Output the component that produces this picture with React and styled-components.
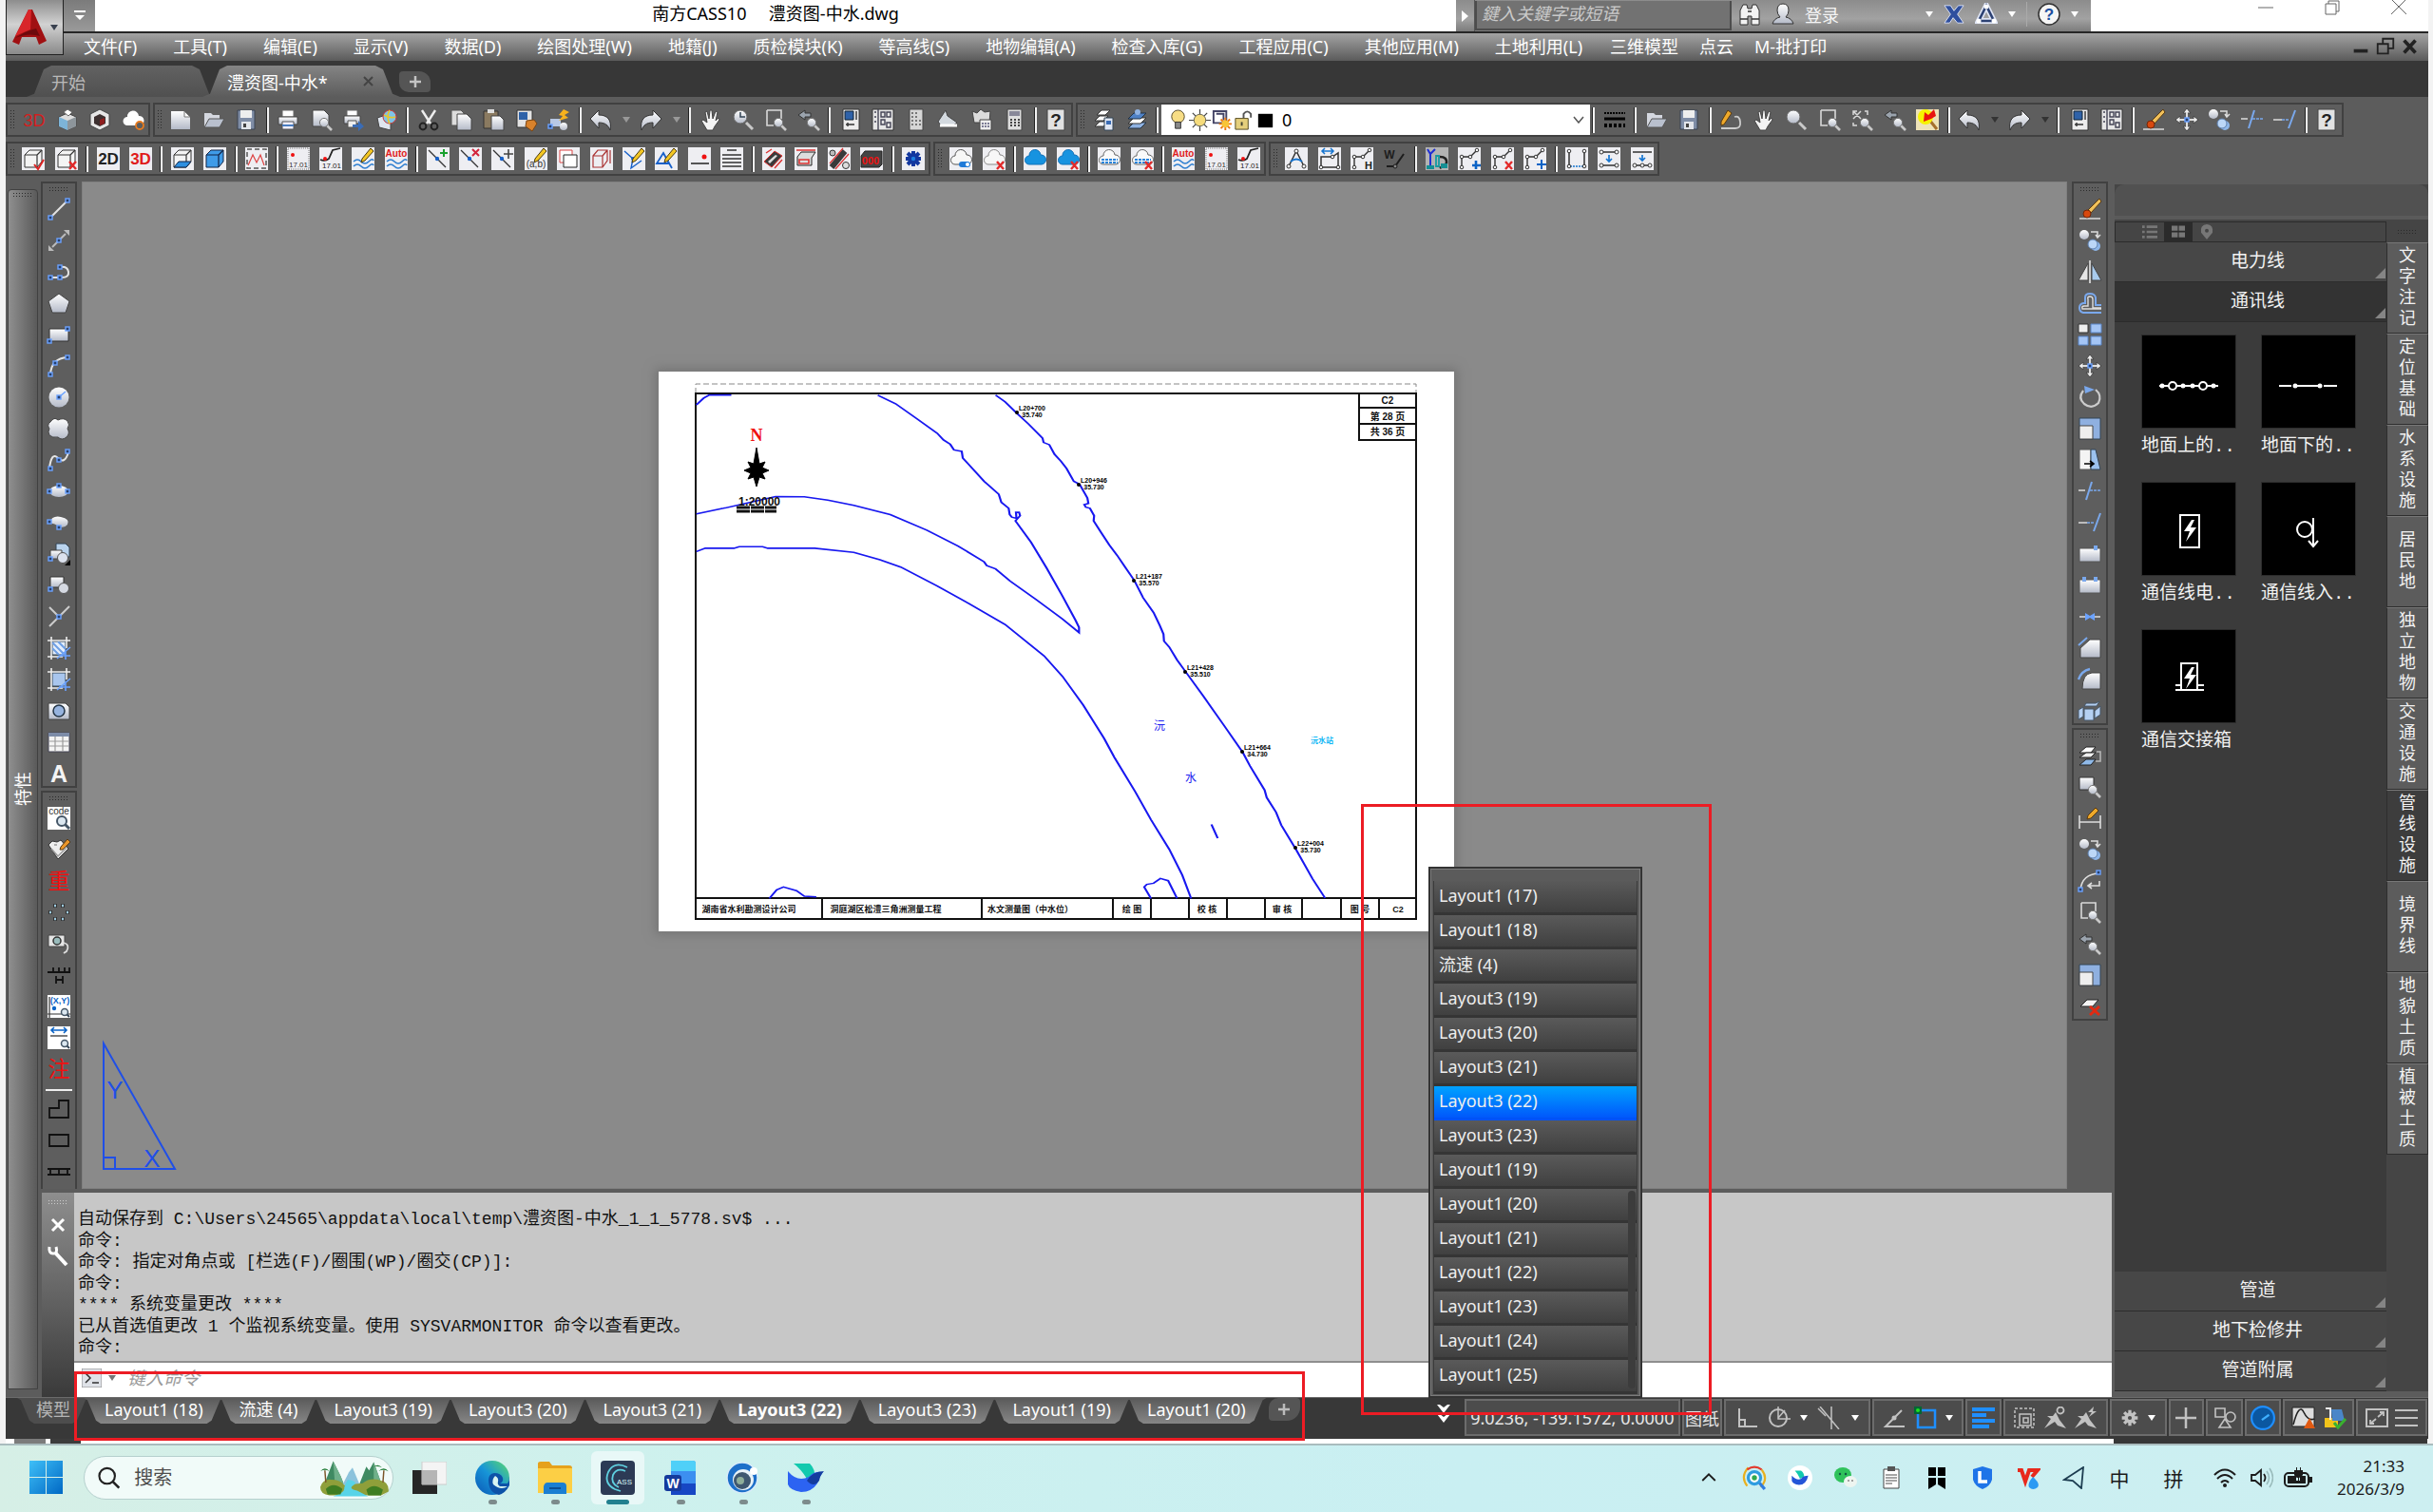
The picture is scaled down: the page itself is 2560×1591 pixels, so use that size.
import { createGlobalStyle, styled, css } from "styled-components"

const GlobalStyle = createGlobalStyle`
*{ box-sizing: border-box; }
body{
margin: 0;
background: #f3f3f3;
font-family: "Noto Sans", "Noto Sans CJK SC", sans-serif;
font-size: 18px;
}
button, input, select{
font: inherit;
color: inherit;
margin: 0;
padding: 0;
border: 0;
background: none;
}
button{ cursor: pointer; }
`

/* ---------- layout ---------- */

const Page = styled.div`
position: relative;
min-height: 100vh;
display: flex;
flex-direction: column;
`
const Window = styled.div`
flex: 1;
margin: 0 5px 0 6px;
background: #5c5c5c;
display: flex;
flex-direction: column;
`
const Header = styled.header`
display: grid;
grid-template-columns: 61px 1fr;
grid-template-rows: 33px 31px;
`
const AppButton = styled.button`
grid-area: 1 / 1 / 3 / 2;
z-index: 1;
height: 58px;
border: 1px solid #222;
border-top: 0;
background: linear-gradient(#8d8d8d, #d2d2d2 45%, #8a8a8a);
display: flex;
align-items: center;
justify-content: center;
gap: 4px;
`
const TitleBar = styled.div`
grid-area: 1 / 2;
background: #fff;
display: flex;
`
const QuickAccess = styled.button`
width: 33px;
background: linear-gradient(#7b7b7b, #9a9a9a);
display: flex;
align-items: center;
justify-content: center;
`
const Title = styled.h1`
flex: 1;
margin: 0;
font-size: 18px;
font-weight: 400;
line-height: 29px;
text-align: center;
white-space: pre;
color: #000;
`
const InfoCenter = styled.div`
width: 668px;
background: linear-gradient(#8c8c8c, #a2a2a2 60%, #7c7c7c);
color: #f4f4f4;
display: flex;
align-items: center;
`
const InfoArrow = styled.button`
width: 20px;
height: 33px;
border-right: 1px solid #555;
display: flex;
align-items: center;
justify-content: center;
`
const KeywordInput = styled.input`
width: 270px;
height: 31px;
padding: 0 5px 4px;
background: #727272;
border: 2px solid #4c4c4c;
border-top: 0;
font-style: italic;
&::placeholder{ color: #c9c9c9; opacity: 1; }
`
const InfoItems = styled.div`
flex: 1;
padding: 0 6px 3px 7px;
display: flex;
align-items: center;
gap: 11px;
`
const Login = styled.button`
width: 116px;
text-align: left;
`
const Divider = styled.span`
width: 1px;
height: 26px;
background: #aaa;
`
const WindowControls = styled.div`
width: 355px;
padding: 0 19px 14px 0;
display: flex;
align-items: center;
justify-content: flex-end;
gap: 46px;
`
const MenuBar = styled.nav`
grid-area: 2 / 1 / 3 / 3;
padding: 0 8px 2px 82px;
border-top: 2px solid #262626;
background: linear-gradient(#a3a3a3, #5b5b5b);
color: #fff;
display: flex;
align-items: center;
gap: 22px;
`
const MenuGroup = styled.div`
margin-right: 7px;
display: flex;
gap: 38px;
`
const MenuItem = styled.button`
height: 26px;
line-height: 26px;
white-space: nowrap;
`
const MdiControls = styled.div`
margin-left: auto;
display: flex;
gap: 4px;
`
const DocTabs = styled.div`
height: 38px;
padding: 5px 0 0 22px;
background: #373737;
display: flex;
`
const DocTab = styled.button`
width: ${(p) => p.$width};
padding: 0 28px 0 26px;
margin-right: -15px;
clip-path: polygon(0 100%, 8px 90%, 18px 12%, 26px 0, calc(100% - 26px) 0, calc(100% - 18px) 12%, calc(100% - 8px) 90%, 100% 100%);
background: ${(p) => (p.$active ? "linear-gradient(#848484, #5c5c5c)" : "linear-gradient(#626262, #505050)")};
color: ${(p) => (p.$active ? "#fff" : "#b9b9b9")};
display: flex;
align-items: center;
justify-content: space-between;
`
const NewTab = styled.button`
width: 33px;
height: ${(p) => (p.$bottom ? "24px" : "22px")};
margin: ${(p) => (p.$bottom ? "0 0 0 8px" : "6px 0 5px 14px")};
border-radius: ${(p) => (p.$bottom ? "10px 4px 14px 4px" : "4px 12px 4px 10px")};
background: #555;
color: #c4c4c4;
display: flex;
align-items: center;
justify-content: center;
`

/* ---------- toolbars ---------- */

const ToolbarArea = styled.div`
height: 89px;
padding-top: 6px;
display: flex;
flex-direction: column;
gap: 5px;
`
const ToolbarRow = styled.div`
display: flex;
gap: 3px;
`
const Grip = styled.span`
flex: none;
width: ${(p) => (p.$wide ? "22px" : "7px")};
height: ${(p) => (p.$wide ? "7px" : "22px")};
background: radial-gradient(circle, ${(p) => p.$color || "#2b2b2b"} 1px, transparent 1px) 0 0 / 3px 3px;
`
const Toolbar = styled.div`
width: ${(p) => p.$width};
height: 36px;
padding: 0 4px 0 2px;
border: 2px solid #414141;
background: #5e5e5e;
display: flex;
align-items: center;
justify-content: space-between;
${Grip}{ margin-right: -4px; }
`
const ToolButton = styled.button`
flex: none;
width: 24px;
height: 24px;
display: flex;
`
const Separator = styled.span`
flex: none;
width: 3px;
height: 27px;
margin: 0 -2px;
background: #f2f2f2;
border-left: 1px solid #222;
`
const LayerCombo = styled.label`
width: 451px;
height: 32px;
margin: 0 -6px;
padding: 0 6px;
background: #fff;
color: #000;
display: flex;
align-items: center;
`
const LayerSelect = styled.select`
flex: 1;
height: 30px;
padding-left: 6px;
appearance: none;
`
const Arrow = styled.span`
flex: none;
border: 4px solid transparent;
border-top: 6px solid ${(p) => p.$color || "#fff"};
border-bottom: 0;
`

/* ---------- workspace ---------- */

const Workspace = styled.div`
flex: 1;
display: flex;
`
const PropertiesPalette = styled.aside`
width: 32px;
margin: 8px 3px 8px 2px;
padding-top: 2px;
border: 1px solid #414141;
border-radius: 4px 4px 0 0;
background: linear-gradient(90deg, #8f8f8f, #5a5a5a);
color: #fff;
display: flex;
flex-direction: column;
align-items: center;
`
const PaletteTitle = styled.span`
margin-top: 603px;
writing-mode: vertical-rl;
text-orientation: sideways;
transform: rotate(180deg);
line-height: 20px;
`
const Center = styled.main`
flex: 1;
min-width: 0;
display: flex;
flex-direction: column;
`
const DrawingRow = styled.div`
flex: 1;
padding-right: 7px;
display: flex;
gap: 5px;
`
const SideBars = styled.div`
display: flex;
flex-direction: column;
gap: 3px;
`
const SideBar = styled.div`
width: 38px;
padding: 3px 0 1px;
border: 2px solid #414141;
background: #5e5e5e;
display: flex;
flex-direction: column;
align-items: center;
gap: 9px;
${(p) => p.$grow && css`flex: 1; border-bottom: 0;`}
${Grip}{ margin-bottom: -4px; }
`
const SideLine = styled.span`
width: 28px;
height: 2px;
margin-bottom: -2px;
background: #eee;
`
const Canvas = styled.div`
position: relative;
flex: 1;
background: #8a8a8a;
border: 1px solid #808080;
`
const Paper = styled.svg`
position: absolute;
left: 606px;
top: 199px;
background: #fff;
box-shadow: 0 0 10px 4px #777;
`
const Ucs = styled.svg`
position: absolute;
left: 17px;
bottom: 14px;
`
const Command = styled.section`
height: 215px;
margin: 4px 3px 0 1px;
display: flex;
`
const CommandGrip = styled.div`
width: 34px;
padding-top: 7px;
background: linear-gradient(#8e8e8e, #3a3a3a);
color: #fff;
display: flex;
flex-direction: column;
align-items: center;
gap: 12px;
`
const CommandBody = styled.div`
flex: 1;
display: flex;
flex-direction: column;
`
const History = styled.div`
height: 179px;
padding: 17px 4px 3px;
background: #c7c7c7;
border-bottom: 2px solid #8e8e8e;
color: #111;
font-family: "Liberation Mono", "Noto Sans CJK SC", monospace;
font-size: 18px;
line-height: 22px;
display: flex;
flex-direction: column;
justify-content: space-between;
`
const Line = styled.div`
height: 22px;
white-space: pre;
`
const CommandLine = styled.div`
flex: 1;
padding: 0 8px 5px;
background: #fff;
display: flex;
align-items: center;
gap: 7px;
`
const CommandInput = styled.input`
flex: 1;
padding: 0 5px 3px;
font-style: italic;
font-family: "Noto Sans CJK SC", sans-serif;
font-size: 19px;
&::placeholder{ color: #9b9b9b; opacity: 1; }
`

/* ---------- symbol panel ---------- */

const SymbolPanel = styled.aside`
width: 330px;
margin: 3px 0 6px;
background: #454545;
display: flex;
flex-direction: column;
color: #f2f2f2;
font-family: "Liberation Mono", "Noto Sans CJK SC", monospace;
font-size: 19px;
`
const PanelHeader = styled.div`
height: 37px;
padding: 7px 8px;
border-radius: 10px 10px 0 0;
background: #515151;
border-bottom: 4px solid #5a5a5a;
`
const PanelBody = styled.div`
flex: 1;
margin-top: 2px;
display: flex;
`
const PanelMain = styled.div`
width: 286px;
background: #3b3b3b;
display: flex;
flex-direction: column;
`
const ViewTabs = styled.div`
height: 22px;
padding-left: 21px;
background: #454545;
border: 1px solid #2b2b2b;
display: flex;
`
const ViewTab = styled.button`
width: 30px;
background: ${(p) => (p.$active ? "#2b2b2b" : "transparent")};
display: flex;
align-items: center;
justify-content: center;
`
const Category = styled.button`
position: relative;
height: 42px;
padding-left: 15px;
border-bottom: 1px solid #2c2c2c;
background: ${(p) => (p.$open ? "#333" : "#474747")};
line-height: 42px;
text-align: center;
&::after{
content: "";
position: absolute;
right: 1px;
bottom: 3px;
border-left: 11px solid transparent;
border-bottom: 11px solid #858585;
}
`
const Symbols = styled.div`
flex: 1;
padding: 13px 0 0 28px;
display: grid;
grid-template-columns: 100px 100px;
column-gap: 26px;
align-content: start;
`
const Symbol = styled.button`
height: 155px;
text-align: left;
white-space: nowrap;
display: flex;
flex-direction: column;
gap: 5px;
line-height: 28px;
`
const Preview = styled.span`
width: 100px;
height: 99px;
background: #000;
border: 1px solid #2c2c2c;
`
const GroupTabs = styled.div`
flex: 1;
display: flex;
flex-direction: column;
`
const GroupGrip = styled.div`
height: 22px;
display: flex;
align-items: center;
justify-content: center;
`
const GroupTab = styled.button`
height: 96px;
padding: 0 12px;
border: 1px solid #2e2e2e;
border-top-color: #777;
background: ${(p) => (p.$active ? "#3d3d3d" : "#5c5c5c")};
font-size: 18px;
line-height: 22px;
word-break: break-all;
`

/* ---------- layout tabs and status ---------- */

const BottomBar = styled.footer`
height: 44px;
border-top: 1px solid #6b6b6b;
background: #383838;
color: #fff;
display: flex;
`
const LayoutTabs = styled.div`
flex: 1;
padding: 0 0 0 12px;
display: flex;
`
const LayoutTab = styled.button`
height: 27px;
padding: 0 22px 2px;
margin-right: -6px;
background: linear-gradient(#5a5a5a, #868686);
clip-path: polygon(0 0, 4px 8%, 13px 88%, 18px 100%, calc(100% - 18px) 100%, calc(100% - 13px) 88%, calc(100% - 4px) 8%, 100% 0);
white-space: nowrap;
line-height: 25px;
${(p) => p.$active && css`font-weight: 700;`}
${(p) => p.$model && css`
padding: 0 20px 2px;
background: #4d4d4d;
color: #b5b5b5;
`}
`
const Overflow = styled.div`
position: relative;
width: 38px;
padding-left: 8px;
`
const LayoutMenu = styled.div`
position: absolute;
left: 0;
bottom: 43px;
width: 225px;
padding: 13px 3px 2px;
background: #5b5b5b;
border: 2px solid #333;
box-shadow: inset 0 0 0 1px #7b7b7b;
`
const LayoutList = styled.div`
height: 540px;
border: solid #3a3a3a;
border-width: 0 1px;
`
const LayoutOption = styled.button`
display: block;
width: 100%;
height: 36px;
padding: 0 5px 3px;
text-align: left;
border-bottom: 3px solid ${(p) => (p.$active ? "#0052f5" : "#353535")};
background: ${(p) => (p.$active ? "linear-gradient(#00a2ff, #0058fb)" : "linear-gradient(#5a5a5a, #404040)")};
color: #eee;
`
const Scroll = styled.span`
position: absolute;
right: 5px;
bottom: 8px;
width: 8px;
height: 208px;
border-radius: 4px;
background: #3c3c3c;
`
const Status = styled.div`
width: 1014px;
padding: 1px 1px 2px 0;
display: flex;
gap: 2px;
`
const Cell = styled.div`
width: ${(p) => p.$width};
height: 39px;
border: 2px solid #6c6c6c;
background: #4c4c4c;
color: #e6e6e6;
white-space: nowrap;
display: flex;
align-items: center;
justify-content: space-evenly;
`
const Strip = styled.div`
height: 5px;
margin: 0 6px;
padding-left: 9px;
background: #fff;
display: flex;
gap: 5px;
`
const StripPart = styled.span`
width: ${(p) => p.$width};
margin-left: ${(p) => (p.$end ? "auto" : 0)};
background: ${(p) => p.$color};
`

/* ---------- taskbar ---------- */

const Taskbar = styled.footer`
height: 72px;
padding: 0 30px 3px 24px;
border-top: 2px solid #a9bcbe;
background: linear-gradient(90deg, #d6efe6, #cdf1ee 30%, #c9eff2 60%, #cdeff1);
color: #1b1b1b;
display: flex;
align-items: center;
`
const Start = styled.button`
width: 49px;
height: 48px;
display: flex;
align-items: center;
justify-content: center;
`
const Search = styled.label`
width: 326px;
height: 46px;
margin: 0 5px 0 15px;
padding: 0 4px 0 14px;
border: 1px solid #b5d0ce;
border-radius: 23px;
background: #f1fbf9;
display: flex;
align-items: center;
gap: 15px;
`
const SearchInput = styled.input`
width: 181px;
font-size: 20px;
&::placeholder{ color: #4c4c4c; opacity: 1; }
`
const Task = styled.button`
position: relative;
width: 56px;
height: 56px;
margin: 0 5px;
border-radius: 6px;
background: ${(p) => (p.$active ? "#e8f8f7" : "transparent")};
display: flex;
align-items: center;
justify-content: center;
${(p) => p.$running && css`
&::after{
content: "";
position: absolute;
bottom: 0;
width: ${p.$active ? "24px" : "9px"};
height: 5px;
border-radius: 3px;
background: ${p.$active ? "#22808f" : "#7d8b8c"};
}
`}
`
const Tray = styled.div`
margin-left: auto;
display: flex;
align-items: center;
`
const TrayItem = styled.button`
width: ${(p) => p.$width || "48px"};
height: 44px;
font-size: 21px;
display: flex;
align-items: center;
justify-content: center;
`
const Clock = styled.time`
width: 92px;
font-size: 17px;
line-height: 24px;
text-align: right;
`
const Mark = styled.div`
position: absolute;
left: ${(p) => p.$left};
top: ${(p) => p.$top};
width: ${(p) => p.$width};
height: ${(p) => p.$height};
border: 3px solid #ec1c24;
pointer-events: none;
`

/* ---------- icons ---------- */

const L = (d, c = "#e4e4e4", w = 2, dash) => <path d={d} stroke={c} strokeWidth={w} strokeDasharray={dash} fill="none" />
const F = (d, c = "url(#ice)", s = "none") => <path d={d} fill={c} stroke={s} />
const C = (x, y, r, c = "url(#ice)", s = "none", w = 1) => <circle cx={x} cy={y} r={r} fill={c} stroke={s} strokeWidth={w} />
const N = (x, y) => <rect x={x - 2} y={y - 2} width="4" height="4" fill="#27406b" stroke="#6ba2ff" strokeWidth="1.4" />
const T = (s, x, y, size, c, w = 700) => <text x={x} y={y} fontSize={size} fill={c} fontWeight={w} textAnchor="middle" fontFamily="Liberation Sans, Noto Sans CJK SC, sans-serif">{s}</text>
const tile = <rect width="24" height="24" fill="#eeeef2" />
const redX = L("M15 15l7 8M22 15l-7 8", "#e32a2a", 2.4)
const waves = <>{L("M2 15q4-4 8 0t8 0 5-1M2 20q4-4 8 0t8 0 5-1", "#2f7fd0", 1.6)}</>
const pencil = <>{F("M20 1l3 3-9 10-4 2 1-4z", "#f3c623", "#4a3a12")}</>
const lens = <>{L("M18 18l5 5", "#c9c9c9", 2.6)}{C(15, 15, 4.6, "url(#ice)", "#777")}</>
const cloud = "M6 18a4.5 4.5 0 0 1 0-9 6 6 0 0 1 12-1 5 5 0 0 1 1 10z"
const poly = <>{L("M4 21V10h9l7-7", "#333", 1.4)}{C(4, 21, 1.8, "#fff", "#333")}{C(4, 10, 1.8, "#fff", "#333")}{C(13, 10, 1.8, "#fff", "#333")}{C(20, 3, 1.8, "#fff", "#333")}</>
const box = <>{F("M3 8l5-5h13v12l-5 6H3z", "#f4f4f4", "#333")}{L("M3 8h13v13M16 8l5-5", "#333", 1.2)}</>
const crossing = <>{L("M2 3l18 18", "#333", 1.3)}{C(11, 12, 2.2, "#1760c9")}</>

const icons = {
  three: <>{T("3D", 12, 19, 18, "#d21f1f", 400)}</>,
  cube: <>{F("M12 5l9 4v10l-9 4-9-4V9z", "#ddd", "#444")}{F("M3 9l9 4v10l-9-4z", "#7db4d8")}{F("M12 13l9-4v10l-9 4z", "#8d959b")}{F("M8 4l4-3 5 3-4 4z", "#fff", "#666")}</>,
  cube2: <>{F("M12 1l10 5v12l-10 5-10-5V6z", "#e6e6e6", "#444")}{F("M12 6l6 3v7l-6 3-6-3V9z", "#3d3030")}{F("M12 12l5-2v6l-5 2z", "#8e1e1e")}</>,
  cloudKey: <>{F(cloud, "#fff")}{C(19, 18, 4, "#5e5e5e", "#e87b1e", 1.8)}</>,
  fresh: <>{F("M2 3h14l6 6v13H2z")}{F("M16 3v6h6z", "#fff", "#777")}</>,
  open: <>{F("M2 5h7l2 2h7v4H8L2 20z", "#d4d7df")}{F("M7 11h16l-5 9H2z", "#b9c0ce", "#555")}</>,
  save: <>{F("M3 2h18v20H3z", "#7f8da6", "#3b4250")}{F("M6 2h12v8H6z", "#eee")}{F("M7 14h10v8H7z", "#e2e5ea")}{F("M9 16h3v4H9z", "#444")}</>,
  print: <>{F("M6 2h12v7H6z", "#fff", "#666")}{F("M2 9h20v8H2z", "url(#ice)", "#444")}{F("M6 14h12v8H6z", "#eef", "#555")}{F("M6 17h12v2H6z", "#4a7dc0")}</>,
  preview: <>{F("M3 2h12l5 5v12H3z", "url(#ice)", "#444")}{lens}</>,
  publish: <>{F("M5 2h11v6H5z", "#fff", "#666")}{F("M2 8h17v8H2z", "url(#ice)", "#444")}{F("M6 13h9v7H6z", "#eee", "#555")}{F("M11 17h6v-4l6 6-6 5v-4h-6z", "#3a6cb5")}</>,
  globe: <>{F("M2 10l9-3 5 8v8L4 20z", "#dfe6ef", "#444")}{C(15, 9, 7, "#7fc4e8", "#c33", 1)}{L("M9 7q6 4 12 2M15 2q-4 7 0 14", "#e8c62b", 1.6)}</>,
  cut: <>{L("M5 2l9 14M19 2l-9 14", "#eee", 2.4)}{C(6, 19, 3.4, "none", "#222", 2)}{C(18, 19, 3.4, "none", "#222", 2)}</>,
  copy: <>{F("M2 2h10l3 3v13H2z", "#ddd", "#555")}{F("M8 6h10l5 5v12H8z", "url(#ice)", "#444")}</>,
  paste: <>{F("M2 3h15v18H2z", "#8a7a60", "#333")}{F("M6 1h7v4H6z", "#ddd")}{F("M10 8h9l4 4v11H10z", "url(#ice)", "#444")}</>,
  match: <>{F("M2 2h16v18H2z", "#e3e3e3", "#333")}{F("M4 4h9v8H4z", "#2f62a8")}{F("M12 13l8-1 3 4-5 8-7-5z", "#d9822b", "#7b4512")}</>,
  block: <>{F("M3 11h11v8H3z", "#b8c8e4")}{C(17, 19, 4)}{F("M17 1l6 3-5 3 4 3-10 3 4-5-4-1z", "#f6b21d")}{N(3, 19)}</>,
  undo: <>{F("M10 2v5c9 0 14 5 12 16-2-5-5-8-12-8v6L1 11z", "url(#ice)", "#333")}</>,
  redo: <>{F("M14 2v5C5 7 0 12 2 23c2-5 5-8 12-8v6l9-10z", "url(#ice)", "#333")}</>,
  hand: <>{F("M8 23L2 13l2-1 4 3L6 4l2-1 2 8 1-9h2l1 9 3-8 2 1-2 9 3-3 1 2-5 7-2 4z", "#f3f3f3", "#444")}</>,
  zoomRt: <>{L("M15 15l7 7", "#c9c9c9", 3)}{C(9, 9, 7, "url(#ice)", "#666")}{L("M9 4v5h5", "#345", 1.5)}</>,
  zoomWin: <>{L("M3 2h15v9M3 2v16h7", "#d9d9d9", 1.6)}{lens}</>,
  zoomPrev: <>{F("M1 7l7-5v3h6v4H8v3z", "#9aa3ad", "#333")}{lens}</>,
  zoom: <>{L("M15 15l7 7", "#c9c9c9", 3)}{C(9, 9, 7, "url(#ice)", "#666")}</>,
  extents: <>{L("M3 3l8 8M11 3l-8 8M3 7V3h4M15 3h3v4M3 15v3h4", "#d9d9d9", 1.5)}{lens}</>,
  yellow: <>{F("M0 1h24v22H0z", "#eee3b8")}{L("M14 12l8 10", "#a5702c", 3)}{C(10, 9, 8, "#f7f200")}{F("M8 14l1-10 4 3 6-6 2 7-5 3z", "#e8140f")}</>,
  props: <>{F("M4 1h17v22H4z", "#ececec", "#333")}{F("M6 3h9v9H6z", "#2f62a8", "#123")}{L("M7 17h9M9 15v4M18 3v9", "#333", 1.4)}</>,
  center: <>{F("M1 1h22v22H1z", "#e6e6e6", "#333")}{L("M7 1v22M10 4h4v5h-4zM16 4h4v5h-4zM10 12h4v5h-4zM16 15h4v5h-4zM3 4h2M3 9h2M3 14h2", "#445", 1.4)}</>,
  palettes: <>{F("M5 1h14v22H5z", "#d6d6d6", "#444")}{L("M8 4v16M12 4v16M16 12v8", "#777", 2, "2 2")}</>,
  sheets: <>{F("M1 14l8-12 2 6 10 7-5 4H5z", "#d3d9df", "#444")}{L("M3 18h18", "#fff", 3)}</>,
  markup: <>{F("M2 3l5 2 4-4 4 3 6-1-1 12H4z", "#dcdcdc", "#444")}{F("M10 12h12v11H10z", "#eee", "#444")}{L("M12 16h8M12 19h8", "#557", 1.5, "2 1")}</>,
  calc: <>{F("M5 1h15v22H5z", "#dedede", "#444")}{F("M7 3h11v5H7z", "#889")}{L("M8 12h10M8 15h10M8 18h10", "#444", 1.8, "2 2")}</>,
  help: <>{F("M3 1h18v22H3z", "#e2e2e2", "#444")}{T("?", 12, 19, 19, "#222")}</>,
  layerProps: <>{F("M5 7l5-5h9l-5 5zM3 13l5-5h9l-5 5zM3 19l5-5h9l-5 5z", "#fff", "#333")}{F("M13 10h9v13h-9z", "#dfe6f3", "#345")}{F("M15 13h5v4h-5z", "#3a6cb5")}</>,
  layerStates: <>{F("M3 21l6-6h13l-6 6z", "#8fb2e2", "#234")}{F("M3 16l6-6h13l-6 6z", "#fff", "#333")}{F("M3 11l6-6h13l-6 6z", "#4f81c5", "#234")}{C(13, 4, 3, "#8fb2e2")}</>,
  bulb: <>{C(12, 8, 7, "#f7dd85", "#55492a")}{F("M9 14h6v7H9z", "#888", "#333")}</>,
  sun: <>{L("M12 0v24M0 12h24M4 4l16 16M20 4L4 20", "#444", 1.3)}{C(12, 12, 6.5, "#f6dc7c", "#665")}</>,
  sunVp: <>{L("M3 2h14v13H3zM6 5h8v7", "#446", 2)}{L("M16 9v14M9 16h14M11 11l10 10M21 11L11 21", "#ec7a12", 2)}{C(16, 16, 4, "#f8c537")}</>,
  lock: <>{L("M12 10V5q4-5 8 0v4", "#555", 2)}{F("M3 10h14v12H3z", "#e5cf7c", "#554a20")}{L("M10 14v4", "#443", 2)}</>,
  black: <>{F("M4 5h16v15H4z", "#000")}</>,
  ltype: <>{L("M1 5h22", "#000", 2, "2 1")}{L("M1 11h22", "#000", 3)}{L("M1 18h22", "#000", 4, "3 2")}</>,
  pencilLoop: <>{L("M2 21h15q6 0 5-7t-6-5", "#ccc", 1.8)}{F("M9 2l4 3-8 12-3 1v-4z", "#efa92a", "#5a3a10")}</>,
  brush: <>{L("M1 22h22", "#ddd", 1.5)}{F("M22 1l2 3-11 12-3-3z", "#f0c05a", "#5a3a10")}{C(9, 17, 4, "#d8480e", "#742707")}</>,
  move: <>{F("M12 0l4 5H8zM12 24l4-5H8zM0 12l5-4v8zM24 12l-5-4v8z", "#eee", "#444")}{L("M12 4v16M4 12h16", "#ddd", 2)}{N(12, 12)}</>,
  copyObj: <>{C(6, 6, 5)}{C(18, 18, 5, "#8fb7e9")}{C(15, 16, 5, "#bcd7f7", "#5d7fae")}{L("M13 3h7v5M18 6l2 3 3-3", "#ddd", 1.5)}</>,
  trim: <>{L("M0 11h7", "#d5d5d5", 1.6)}{L("M14 2L8 21", "#7aa8ec", 2)}{L("M12 11h12", "#7aa8ec", 1.5, "3 1")}</>,
  extend: <>{L("M0 12h9", "#d5d5d5", 1.6)}{L("M9 12h7", "#7aa8ec", 1.6, "3 1")}{L("M23 2l-7 19", "#7aa8ec", 2)}</>,

  boxOk: <>{tile}{box}{L("M13 18l4 5 6-10", "#d22", 2)}</>,
  boxNo: <>{tile}{box}{redX}</>,
  t2d: <>{tile}{T("2D", 12, 18, 17, "#222")}</>,
  t3d: <>{tile}{T("3D", 12, 18, 17, "#e01b1b")}</>,
  boxFloor: <>{tile}{box}{F("M3 21l5-6h13l-5 6z", "#2e8fe0", "#124")}</>,
  boxBlue: <>{tile}{F("M3 8l5-5h13v12l-5 6H3z", "#3f9be8", "#124")}{L("M3 8h13v13M16 8l5-5", "#124", 1.2)}</>,
  graph: <>{tile}{L("M2 2h20v20H2z", "#555", 1.5, "5 3")}{L("M3 19l5-11 4 8 4-8 4 11", "#d44", 1.2)}</>,
  num: <>{tile}{C(6, 8, 2, "#e11")}{L("M1 1h22v22H1z", "#777", 1, "1 1")}{T("17.01", 12, 21, 8, "#333", 400)}</>,
  curve: <>{tile}{L("M1 13q5 2 9-1l4-9 8-2", "#222", 1.8)}{C(6, 12, 2, "#e11")}{T("17.01", 13, 22, 8, "#222", 400)}</>,
  penWave: <>{tile}{waves}{pencil}</>,
  auto: <>{tile}{waves}{T("Auto", 12, 10, 10, "#e01b1b")}</>,
  lnPlus: <>{tile}{crossing}{L("M18 2v8M14 6h8", "#19a12f", 2)}</>,
  lnX: <>{tile}{crossing}{L("M14 2l7 7M21 2l-7 7", "#d3243c", 2)}</>,
  lnMove: <>{tile}{crossing}{L("M18 2v10M13 7h10", "#444", 1.6)}</>,
  ab: <>{tile}{T("(a,b)", 12, 21, 10, "#333", 400)}{pencil}</>,
  squares: <>{tile}{F("M3 3h13v13H3z", "#fff", "#d44")}{F("M7 8h14v13H7z", "#fff", "#222")}</>,
  box3: <>{tile}{L("M3 9l5-6h10v11l-5 7H3zM3 9h10v12M13 9l5-6M21 3v14", "#a33", 1.2)}</>,
  plPen: <>{tile}{L("M2 4l9 8-2 10 11-8", "#1760c9", 1.4)}{C(11, 12, 2, "#1760c9")}{pencil}</>,
  triPen: <>{tile}{L("M9 6L2 17h13zM9 6l9 16", "#1760c9", 1.8)}{pencil}</>,
  dotLine: <>{tile}{C(17, 10, 2.5, "#e11")}{L("M3 17h19", "#222", 1.5)}</>,
  list: <>{tile}{L("M7 3h10M2 8h20M2 12h20M2 16h20M2 20h20", "#333", 1.6)}</>,
  bookA: <>{tile}{F("M2 15L13 4l8 5-11 12z", "#3a3a3a", "#d33")}{F("M6 15l8-7 2 1-8 8z", "#ddd")}{L("M4 6l6-4M13 22l8-9", "#d33", 1.5)}</>,
  bookB: <>{tile}{F("M3 10l4-5h15l-4 6v8H3z", "#ddd", "#222")}{L("M2 3h20M5 13h10v4H5z", "#d33", 1.6)}</>,
  bookC: <>{tile}{L("M4 21L18 4", "#3a3a3a", 6)}{L("M2 17L16 1M8 23L22 7", "#d33", 1.2)}{C(19, 19, 3.5, "#ddd", "#333")}{C(5, 6, 3, "#bbb", "#333")}</>,
  bookD: <>{tile}{F("M1 9l4-5h18v14l-3 3H1z", "#444", "#222")}{T("000", 11, 18, 11, "#e11")}</>,
  gear: <>{tile}{L("M12 4v16M4 12h16M6 6l12 12M18 6L6 18", "#12379f", 4)}{C(12, 12, 6, "#12379f")}{C(12, 12, 2.2, "#1d7fe0")}</>,
  cldTog: <>{tile}{F(cloud, "#f7f7f7", "#555")}<rect x="10" y="15" width="12" height="6" rx="3" fill="#1f7ad8" />{C(19, 18, 2, "#fff")}</>,
  cldX: <>{tile}{F(cloud, "#f7f7f7", "#888")}{redX}</>,
  cld: <>{tile}{F(cloud, "#1793e0", "#1170b8")}</>,
  cldBlueX: <>{tile}{F(cloud, "#1793e0", "#1170b8")}{redX}</>,
  cldGrid: <>{tile}{F(cloud, "#fafafa", "#666")}{L("M4 13h17M4 16h17", "#2a84dc", 1.8, "3 1")}</>,
  cldGridX: <>{tile}{F(cloud, "#fafafa", "#666")}{L("M4 13h17M4 16h17", "#2a84dc", 1.8, "3 1")}{redX}</>,
  arcA: <>{tile}{L("M4 20l8-16 8 16", "#333", 1.5)}{L("M6 15q6-5 12 0", "#1675d1", 1.8)}{C(4, 20, 2, "#fff", "#333")}{C(20, 20, 2, "#fff", "#333")}{C(12, 4, 2, "#fff", "#333")}</>,
  frameArr: <>{tile}{L("M3 10h12l6-4v15H3z", "#333", 1.5)}{L("M4 4h12M7 1L4 4l3 3M13 1l3 3-3 3", "#1675d1", 1.5)}{C(3, 21, 1.8, "#fff", "#333")}{C(21, 21, 1.8, "#fff", "#333")}{C(15, 10, 1.8, "#fff", "#333")}</>,
  polyH: <>{tile}{poly}{T("H", 19, 23, 11, "#222")}</>,
  polyW: <>{T("W", 6, 12, 12, "#1c1c1c")}{L("M3 20h9l9-13", "#1c1c1c", 2)}{C(12, 20, 2, "#888", "#1c1c1c")}</>,
  colored: <><rect width="24" height="24" fill="#b3b3b3" />{L("M5 22V7L2 2M5 7l5-5", "#1d2dd6", 2)}{L("M11 20V9h3v11z", "#159aa0", 1.8)}{L("M15 10q8 0 7 7l-7 5", "#222", 2.5)}{F("M1 19h8v4H1zM16 17h7v5h-7z", "#148f94")}</>,
  polyAdd: <>{tile}{poly}{L("M19 14v9M15 19h9", "#0b63c6", 2.6)}</>,
  polyDel: <>{tile}{poly}{redX}</>,
  polyMove: <>{tile}{poly}{L("M19 13v10M14 18h10", "#0b63c6", 2)}</>,
  frameU: <>{tile}{L("M4 3v17M20 3v17", "#333", 1.5)}{L("M5 20h14", "#1675d1", 1.5, "2 1")}{C(4, 4, 1.8, "#fff", "#333")}{C(20, 4, 1.8, "#fff", "#333")}{C(4, 20, 1.8, "#fff", "#333")}{C(20, 20, 1.8, "#fff", "#333")}</>,
  frameDn: <>{tile}{L("M4 5h16M4 19h16", "#333", 1.5)}{L("M12 8v7M9 12l3 3 3-3", "#1675d1", 1.7)}{C(4, 5, 2, "#fff", "#333")}{C(20, 5, 2, "#fff", "#333")}{C(4, 19, 2, "#fff", "#333")}{C(20, 19, 2, "#fff", "#333")}</>,
  frameDn2: <>{tile}{L("M2 5h20M3 19h18", "#333", 1.5)}{L("M12 8v6M9 11l3 3 3-3", "#1675d1", 1.7)}{C(4, 19, 2, "#fff", "#333")}{C(12, 19, 2, "#fff", "#333")}{C(20, 19, 2, "#fff", "#333")}</>,

  line: <>{L("M3 21L21 3")}{N(3, 21)}{N(21, 3)}</>,
  xline: <>{L("M5 19L19 5", "#bbb")}{F("M1 23v-6l6 6zM23 1v6l-6-6z", "#bbb")}{N(12, 12)}</>,
  pline: <>{L("M2 18h13q8 0 7-6t-9-5")}{N(3, 18)}{N(13, 18)}{N(13, 7)}</>,
  polygon: <>{F("M12 2l11 8-4 12H5L1 10z", "url(#ice)", "#444")}</>,
  rect: <>{F("M2 6h20v13H2z", "url(#ice)", "#333")}{N(2, 19)}{N(21, 6)}</>,
  arc: <>{L("M3 21Q4 4 21 3")}{N(3, 21)}{N(8, 9)}{N(21, 3)}</>,
  circle: <>{C(12, 12, 10.5)}{L("M12 12l7-6", "#6ba2ff", 1.5)}{N(12, 12)}</>,
  revcloud: <>{F("M3 5q4-6 8-2 6-3 10 1 3 4 0 8 3 5-1 9-5 4-9 0-6 1-9-2-2-4 0-7-3-4 1-7z", "url(#ice)", "#444")}</>,
  spline: <>{L("M2 21Q4 3 11 10t11-6")}{N(3, 21)}{N(12, 12)}{N(21, 3)}</>,
  ellipse: <><ellipse cx="12" cy="12" rx="10" ry="6" fill="url(#ice)" />{N(2, 12)}{N(12, 6)}{N(21, 12)}</>,
  ellArc: <>{F("M2 12Q5 4 14 6q10 2 7 8-3 4-9 2-4-3-10-4z")}{N(2, 11)}{N(12, 17)}</>,
  insert: <>{F("M9 1h10l4 4v10H9z", "#b9d3ee", "#345")}{F("M3 8h12v9H3z", "url(#ice)", "#444")}{C(16, 16, 5.5, "#dce2ee", "#555")}{F("M24 18v6h-6z", "#000")}{N(3, 17)}</>,
  makeBlock: <>{F("M3 3h14v11H3z", "url(#ice)", "#333")}{C(17, 15, 5.5, "#d5d9e2", "#555")}{N(3, 16)}</>,
  point: <>{L("M2 2l10 10L23 1M12 12L2 22", "#ccc")}{N(12, 12)}</>,
  hatch: <>{F("M5 5h14v14H5z", "#e4eefc", "#345")}{L("M5 12l7 7M5 6l13 13M11 5l8 8", "#6e9fe4", 2)}{L("M0 4h24M0 21h16M4 0v24M20 0v12", "#eee", 1.6)}{L("M10 23L24 11M19 14v10M12 20h12", "#6ba2ff", 1.6)}</>,
  gradient: <>{F("M5 5h14v14H5z", "#a9c6ee", "#345")}{L("M0 4h24M0 21h16M4 0v24M20 0v12", "#eee", 1.6)}{L("M10 23L24 11M19 14v10M12 20h12", "#6ba2ff", 1.6)}</>,
  region: <>{F("M1 4h18l4 4v13H1z", "url(#ice)", "#444")}{C(12, 12, 6, "#96b3de", "#234", 1.5)}</>,
  table: <>{F("M1 2h22v20H1z", "#f4f4f4", "#445")}{F("M1 2h22v4H1z", "#7d8ca8")}{L("M1 11h22M1 16h22M8 6v16M16 6v16", "#9a9a9a", 1.2)}</>,
  mtext: <>{T("A", 12, 21, 25, "#f4f4f4")}</>,
  code: <>{F("M0 0h24v24H0z", "#fff")}{T("code", 12, 8, 10, "#333", 400)}{L("M18 18l5 5", "#456", 3)}{C(15, 15, 5, "#dbe7f0", "#456", 2)}</>,
  tags: <>{F("M1 7l4-4 5 1 4-2 8 9-11 11z", "#eee", "#333")}{L("M4 11l7 8 9-9M7 7h3", "#999", 1.5)}{F("M21 1l3 3-8 8-3 0 1-3z", "#e9952a", "#5a3a10")}</>,
  chong: <>{T("重", 12, 20, 23, "#f01010", 400)}</>,
  dots: <>{L("M6 5h4M14 5h4M1 12h4M19 12h4M6 19h4M14 19h4", "#333", 4)}{L("M7 5h2M15 5h2M2 12h2M20 12h2M7 19h2M15 19h2", "#9ecbe0", 2.4)}</>,
  camera: <>{F("M1 3h17v12H1z", "#e5e5e5", "#444")}{C(10, 9, 4, "#9bb", "#333", 1.5)}{L("M17 11q7 2 3 9l-3 2", "#ddd", 1.8)}</>,
  comb: <>{L("M0 9h24M6 4v5M12 4v5M18 4v5M23 4v5M9 13v8M16 13v8M9 17h7", "#111", 1.8)}</>,
  xy: <>{F("M0 0h24v24H0z", "#fff")}{T("(X,Y)", 13, 9, 9, "#0b63c6")}{L("M2 2v22M0 20h24", "#333", 1.2)}{C(7, 14, 2.2, "#0b63c6")}{L("M20 20l3 3", "#345", 2)}{C(18, 18, 3.5, "#dbe7f0", "#456", 1.5)}</>,
  dist: <>{F("M0 0h24v24H0z", "#fff")}{L("M4 4h16M7 1L4 4l3 3M17 1l3 3-3 3", "#0b63c6", 1.6)}{L("M3 10h18", "#333", 1.3)}{L("M20 20l3 3", "#345", 2)}{C(18, 18, 3.5, "#dbe7f0", "#456", 1.5)}</>,
  zhu: <>{T("注", 12, 20, 23, "#f01010", 400)}</>,
  lshape: <>{L("M2 21V11h10V3h10v18z", "#111", 1.8)}</>,
  plain: <>{L("M2 6h20v12H2z", "#111", 1.8)}</>,
  rail: <>{L("M0 9h24M0 15h24M3 9v6M12 9v6M21 9v6", "#111", 1.8)}</>,

  mirror: <>{F("M10 3v18H0z", "#e6e6e6", "#444")}{F("M14 3v18h10z", "#a9cbee", "#444")}{L("M12 0v24", "#eee", 1.5)}</>,
  offset: <>{L("M24 14h-6V6q-1-4-6-4T7 6v6H5q-4 1-4 5t4 5h19", "#7aa8ec", 2)}{L("M24 17h-9V8q0-3-3-3t-2 3v7H6q-3 0-2 3h20", "#ddd", 1.4)}</>,
  array: <>{F("M0 1h10v9H0z", "#eee", "#333")}{F("M13 1h11v9H13zM0 14h10v9H0zM13 14h11v9H13z", "#a4c5f5", "#5b86c8")}</>,
  rotate: <>{L("M5 5q-6 8 1 14 8 6 15-1 4-8-3-14", "#ccc", 2.2)}{F("M6 0l11 4-10 4z", "#7aa8ec")}</>,
  scale: <>{F("M1 1h22v22H1z", "#8fb0e0", "#345")}{F("M1 9h14v14H1z", "#eee", "#444")}</>,
  stretch: <>{F("M1 1h12v21H1z", "#f4f4f4", "#555")}{F("M13 1h5l5 21H13z", "#9cc2ee", "#345")}{L("M6 16h9M12 13l4 3-4 3", "#000", 1.6)}</>,
  brkPt: <>{F("M1 6h22v14H1z", "url(#ice)", "#555")}{F("M16 3h4v5h-4z", "#7aa8ec")}</>,
  brk: <>{F("M1 6h22v14H1z", "url(#ice)", "#555")}{F("M4 3h4v5H4zM16 3h4v5h-4z", "#7aa8ec")}</>,
  join: <>{L("M1 12h22", "#ddd", 1.5)}{F("M7 8l5 3 5-3v8l-5-3-5 3z", "#6ba2ff")}</>,
  chamfer: <>{F("M2 22V12L12 3h11v19z", "url(#ice)", "#444")}{L("M0 9L9 1", "#7aa8ec")}</>,
  fillet: <>{F("M4 22Q4 6 14 5h9v17z", "url(#ice)", "#444")}{L("M0 12Q3 3 12 1", "#7aa8ec", 2.4)}</>,
  explode: <>{F("M6 10h10v12H6zM0 11l5-3v10l-5 3zM17 12l6-5v9l-6 4zM8 4h10l4-2-3 5H6z", "#b5d0f2", "#456")}</>,
  layPrev: <>{F("M1 9l7-6h10l-5 6z", "#fff", "#222")}{F("M1 14l7-5h10l-5 5z", "#eee", "#222")}{F("M1 22l7-6h10l-5 6z", "#8fb9e8", "#222")}{L("M19 8h4v10h-5", "#bbb", 1.5)}</>,
  layFind: <>{F("M1 2h15v13H1z", "url(#ice)", "#333")}{lens}</>,
  dim: <>{L("M1 9v14M23 9v14M1 16h22", "#ddd", 1.6)}{F("M18 1l3 3-8 8-4 1 1-4z", "#efa92a", "#5a3a10")}</>,
  arcEdit: <>{L("M2 21Q4 5 21 4", "#ddd", 1.6)}{L("M22 12v5H11M14 14l-4 3 4 3", "#ddd", 1.6)}{N(2, 21)}{N(21, 3)}</>,
  layDel: <>{F("M2 12l7-7h12l-6 7z", "#f4f4f4", "#222")}{L("M12 12l10 9M22 12l-10 9", "#e22a12", 3)}</>,
}

const Icon = ({ name, size = 24 }) => (
  <svg width={size} height={size} viewBox="0 0 24 24" overflow="visible" aria-hidden="true">{icons[name]}</svg>
)

const Tools = ({ names }) =>
  names.split(" ").map((n, i) => {
    if (n === "|") return <Separator key={i} />
    if (n === "v") return <Arrow key={i} $color={i % 2 ? "#333" : "#999"} />
    if (n === "-") return <SideLine key={i} />
    if (n === "layer")
      return (
        <LayerCombo key={i} aria-label="layer">
          {["bulb", "sun", "sunVp", "lock", "black"].map((x) => <Icon key={x} name={x} size={23} />)}
          <LayerSelect><option>0</option></LayerSelect>
          <svg width="12" height="8" viewBox="0 0 12 8">{L("M1 1l5 6 5-6", "#555", 1.5)}</svg>
        </LayerCombo>
      )
    return <ToolButton key={i} aria-label={n}><Icon name={n} /></ToolButton>
  })

/* ---------- data ---------- */

const menus = ["文件(F)", "工具(T)", "编辑(E)", "显示(V)", "数据(D)", "绘图处理(W)", "地籍(J)", "质检模块(K)", "等高线(S)", "地物编辑(A)", "检查入库(G)", "工程应用(C)", "其他应用(M)", "土地利用(L)"]
const extraMenus = ["三维模型", "点云", "M-批打印"]

const rowOne = [
  ["152px", "three cube cube2 cloudKey"],
  ["968px", "fresh open save | print preview publish globe | cut copy paste match block | undo v redo v | hand zoomRt zoomWin zoomPrev | props center palettes sheets markup calc | help"],
  ["1334px", "layerProps layerStates | layer | ltype | open save | pencilLoop hand zoom zoomWin extents zoomPrev yellow | undo v redo v | props center | brush move copyObj trim extend | help"],
]
const rowTwo = [
  ["973px", "boxOk boxNo | t2d t3d | boxFloor boxBlue | graph | num curve penWave auto | lnPlus lnX lnMove ab squares box3 plPen triPen dotLine list | bookA bookB bookC bookD | gear"],
  ["350px", "cldTog cldX | cld cldBlueX | cldGrid cldGridX | auto num curve"],
  ["411px", "arcA frameArr polyH polyW | colored polyAdd polyDel polyMove | frameU frameDn frameDn2"],
]

const history = [
  "自动保存到 C:\\Users\\24565\\appdata\\local\\temp\\澧资图-中水_1_1_5778.sv$ ...",
  "命令:",
  "命令: 指定对角点或 [栏选(F)/圈围(WP)/圈交(CP)]:",
  "命令:",
  "**** 系统变量更改 ****",
  "已从首选值更改 1 个监视系统变量。使用 SYSVARMONITOR 命令以查看更改。",
  "命令:",
]

const layoutTabs = ["Layout1 (18)", "流速 (4)", "Layout3 (19)", "Layout3 (20)", "Layout3 (21)", "Layout3 (22)", "Layout3 (23)", "Layout1 (19)", "Layout1 (20)"]
const layoutOptions = ["Layout1 (17)", ...layoutTabs, "Layout1 (21)", "Layout1 (22)", "Layout1 (23)", "Layout1 (24)", "Layout1 (25)"]
const groups = ["文字注记", "定位基础", "水系设施", "居民地", "独立地物", "交通设施", "管线设施", "境界线", "地貌土质", "植被土质"]

const bolt = "M52 39l-8 12h6l-4 11 11-15h-6l4-8z"
const symbols = [
  ["地面上的..", <>{L("M18 53h62", "#fff", 2)}{C(21, 53, 2.5, "#fff")}{C(32, 53, 4, "#000", "#fff", 2)}{C(43, 53, 2.5, "#fff")}{C(53, 53, 2.5, "#fff")}{C(64, 53, 4, "#000", "#fff", 2)}{C(75, 53, 2.5, "#fff")}</>],
  ["地面下的..", <>{L("M18 53h13M33 53h30M65 53h14", "#fff", 2)}{C(35, 53, 2.5, "#fff")}{C(61, 53, 2.5, "#fff")}</>],
  ["通信线电..", <>{L("M40 34h20v34H40z", "#fff", 2)}{F(bolt, "#fff")}</>],
  ["通信线入..", <>{L("M54 37v29M49 61l5 6 5-6", "#fff", 2)}{C(45, 49, 8, "none", "#fff", 2)}</>],
  ["通信交接箱", <>{L("M41 63V35h17v28M35 58h6M58 58h7M35 63h30", "#fff", 2)}{F(bolt, "#fff")}</>],
]

const stations = [
  [391, 39, "L20+700", "35.740"],
  [456, 115, "L20+946", "35.730"],
  [514, 216, "L21+187", "35.570"],
  [568, 312, "L21+428", "35.510"],
  [628, 396, "L21+664", "34.730"],
  [684, 497, "L22+004", "35.730"],
]
const blocks = [
  [95, "湖南省水利勘测设计公司"],
  [239, "洞庭湖区松澧三角洲测量工程"],
  [391, "水文测量图（中水位）"],
  [498, "绘 图"],
  [577, "校 核"],
  [656, "审 核"],
  [738, "图 号"],
  [778, "C2"],
]

const MapSheet = () => (
  <Paper width="837" height="589" viewBox="0 0 837 589">
    <path d="M39 23V13H797V23" fill="none" stroke="#888" strokeDasharray="6 3" />
    <g fill="none" stroke="#111" strokeWidth="2">
      <rect x="39" y="23" width="758" height="553" />
      <path d="M39 554H797M737 23V72H797M737 38H797M737 55H797" />
      <path d="M172 554v22M340 554v22M478 554v22M518 554v22M558 554v22M598 554v22M638 554v22M677 554v22M718 554v22M758 554v22" />
    </g>
    <g transform="translate(-14 -11) scale(0.5485 0.3891)" fill="none" stroke="#1818f0" strokeWidth="4">
      <path d="M672 92L690 110L712 140L735 170L762 208L764 220L775 226L785 252L797 270L808 290L822 325L833 333L848 370L850 385L842 388L845 395L853 398L861 418L860 432L875 465L890 497L905 525L920 556L938 593L955 640L975 680L987 715L994 738L995 757L1005 773L1020 808L1038 843L1070 905L1110 985L1146 1058L1160 1095L1188 1160L1192 1180L1210 1220L1220 1255L1248 1320L1280 1400L1304 1452" />
      <path d="M446 92L480 115L520 155L560 195L572 213L585 225L592 240L607 244L609 262L650 325L678 360L683 382L697 398L699 415L703 422L712 425L711 409L717 409L719 418L710 432L740 490L770 560L800 635L825 700L832 720L832 734L800 697L750 645L700 595L672 562L655 553L650 543L600 500L540 457L470 415L400 390L350 376L305 367L250 366L200 382L150 398L98 413" />
      <path d="M98 515L115 506L170 506L180 502L225 502L235 506L325 506L400 517L450 537L490 557L560 608L620 655L690 712L765 797L800 852L840 930L880 1020L900 1072L940 1165L970 1240L1005 1320L1030 1390L1047 1453" />
      <path d="M98 118L112 100L122 92L165 92M238 1453L252 1430L265 1422L290 1432L305 1447L328 1449M970 1453L957 1422L962 1415L975 1412L988 1399L1003 1405L1020 1453M1086 1253L1098 1290" />
    </g>
    <text x="103" y="73" fontSize="18" fontWeight="700" textAnchor="middle" fill="#f01010" fontFamily="Liberation Serif, serif">N</text>
    <path d="M103 80l3 17 6-2-3 6 7 3-7 3 3 6-6-2-3 10-3-10-6 2 3-6-7-3 7-3-3-6 6 2z" fill="#000" stroke="#000" />
    {T("1:20000", 106, 141, 12, "#111")}
    <path d="M82 143h42M82 147h42" stroke="#111" strokeWidth="3" strokeDasharray="14 1" />
    {stations.map(([x, y, a, b]) => (
      <g key={a}>
        {C(x - 14, y + 4, 2, "#000")}
        {T(a, x + 2, y + 2, 7, "#000")}
        {T(b, x + 2, y + 9, 7, "#000")}
      </g>
    ))}
    {T("沅", 527, 377, 12, "#2222f0", 400)}
    {T("水", 560, 432, 12, "#2222f0", 400)}
    {T("沅水站", 698, 391, 8, "#12b8f5")}
    {T("C2", 767, 34, 10, "#111")}
    {T("第 28 页", 767, 51, 10, "#111")}
    {T("共 36 页", 767, 67, 10, "#111")}
    {blocks.map(([x, s]) => <g key={x}>{T(s, x, 569, 9, "#111")}</g>)}
  </Paper>
)

const Win = ({ w = 24, h = 24, children }) => <svg width={w} height={h} viewBox="0 0 24 24" aria-hidden="true">{children}</svg>
const g = "#c2c2c2"

const App = () => {
  return (
    <Page>
      <GlobalStyle />
      <Window>
        <Header>
          <AppButton aria-label="menu">
            <svg width="36" height="38" viewBox="0 0 36 38">
              <defs>
                <linearGradient id="ice" x2="0" y2="1"><stop stopColor="#fff" /><stop offset="1" stopColor="#b4bac8" /></linearGradient>
                <linearGradient id="edge" x1="0" y1="1" x2="1" y2="0"><stop stopColor="#0b56b5" /><stop offset=".5" stopColor="#1795d8" /><stop offset="1" stopColor="#5edc6a" /></linearGradient>
                <linearGradient id="win" x2="1" y2="1"><stop stopColor="#3fc0f8" /><stop offset="1" stopColor="#0068c4" /></linearGradient>
              </defs>
              {F("M17 0L0 34l7 3 3-8h15l3 8 8-4L21 0z", "#a01012")}
              {F("M17 0L3 28l16-7 1-21z", "#d8262a")}
              {F("M3 30q12-8 22-10l4 8q-12-4-26 2z", "#6d0a0c")}
            </svg>
            <Arrow $color="#3a4250" />
          </AppButton>
          <TitleBar>
            <QuickAccess aria-label="quick access">
              <svg width="12" height="12" viewBox="0 0 12 12">{F("M0 0h12v2H0zM1 5h10l-5 5z", "#fff")}</svg>
            </QuickAccess>
            <Title>{"南方CASS10     澧资图-中水.dwg"}</Title>
            <InfoCenter>
              <InfoArrow aria-label="expand"><svg width="7" height="12" viewBox="0 0 7 12">{F("M0 0l7 6-7 6z", "#fff")}</svg></InfoArrow>
              <KeywordInput aria-label="search" placeholder="鍵入关鍵字或短语" />
              <InfoItems>
                <Win>{F("M2 8l3-6h4l1 4h4l1-4h4l3 6v15h-8v-9h-4v9H2z", "#f2f2f2", "#333")}{L("M10 9h4M2 17h8M14 17h8", "#333", 1.5)}</Win>
                <Win>{F("M1 22q2-6 8-7-3-3-3-7 0-7 6-7t6 7q0 4-3 7 6 1 8 7z", "url(#ice)", "#333")}</Win>
                <Login>登录</Login>
                <Arrow />
                <Win w={22}>{F("M1 2h7l4 6 5-6h6l-7 10 7 10h-7l-5-6-4 6H1l7-10z", "#2f4f9e", "#dfe5f5")}</Win>
                <Win>{L("M12 3L4 19h16z", "#dfe5f5", 6)}{L("M12 3L4 19h16z", "#2c4173", 2.6)}{C(12, 4, 2.5, "#fff")}{C(4, 19, 2.5, "#fff")}{C(20, 19, 2.5, "#fff")}</Win>
                <Arrow />
                <Divider />
                <Win>{C(12, 12, 11, "#f6f6f6", "#333", 1.5)}{T("?", 12, 18, 17, "#1c4fa0")}</Win>
                <Arrow />
              </InfoItems>
            </InfoCenter>
            <WindowControls>
              <button aria-label="minimize"><Win>{L("M4 13h16", "#666", 1)}</Win></button>
              <button aria-label="restore"><Win>{L("M5 9h11v11H5zM8 9V6h11v11h-3", "#666", 1)}</Win></button>
              <button aria-label="close"><Win>{L("M4 4l16 16M20 4L4 20", "#666", 1)}</Win></button>
            </WindowControls>
          </TitleBar>
          <MenuBar>
            <MenuGroup>{menus.map((m) => <MenuItem key={m}>{m}</MenuItem>)}</MenuGroup>
            {extraMenus.map((m) => <MenuItem key={m}>{m}</MenuItem>)}
            <MdiControls>
              <Win w={22}>{F("M4 15h16v4H4z", "#222")}</Win>
              <Win w={22}>{L("M3 9h12v11H3zM9 8V3h12v11h-5", "#222", 2)}</Win>
              <Win w={22}>{L("M5 5l13 14M18 5L5 19", "#222", 4)}</Win>
            </MdiControls>
          </MenuBar>
        </Header>
        <DocTabs>
          <DocTab $width="200px">开始</DocTab>
          <DocTab $width="208px" $active>
            澧资图-中水*
            <svg width="11" height="11" viewBox="0 0 11 11">{L("M1 1l9 9M10 1l-9 9", "#444", 2)}</svg>
          </DocTab>
          <NewTab aria-label="new tab"><svg width="12" height="12" viewBox="0 0 12 12">{L("M6 0v12M0 6h12", "#c4c4c4", 2.5)}</svg></NewTab>
        </DocTabs>
        <ToolbarArea>
          <ToolbarRow>{rowOne.map(([w, names]) => <Toolbar key={w} $width={w}><Grip /><Tools names={names} /></Toolbar>)}</ToolbarRow>
          <ToolbarRow>{rowTwo.map(([w, names]) => <Toolbar key={w} $width={w}><Grip /><Tools names={names} /></Toolbar>)}</ToolbarRow>
        </ToolbarArea>

        <Workspace>
          <PropertiesPalette>
            <Grip $wide />
            <PaletteTitle>特性</PaletteTitle>
          </PropertiesPalette>
          <Center>
            <DrawingRow>
              <SideBars>
                <SideBar><Grip $wide /><Tools names="line xline pline polygon rect arc circle revcloud spline ellipse ellArc insert makeBlock point hatch gradient region table mtext" /></SideBar>
                <SideBar $grow><Grip $wide /><Tools names="code tags chong dots camera comb xy dist zhu - lshape plain rail" /></SideBar>
              </SideBars>
              <Canvas>
                <MapSheet />
                <Ucs width="90" height="142" viewBox="0 0 90 142">
                  {L("M5 4V136H80zM5 124h12v12", "#1f4fe8", 2)}
                  {T("Y", 17, 62, 26, "#1f4fe8", 400)}
                  {T("X", 56, 134, 26, "#1f4fe8", 400)}
                </Ucs>
              </Canvas>
              <SideBars>
                <SideBar><Grip $wide /><Tools names="brush copyObj mirror offset array move rotate scale stretch trim extend brkPt brk join chamfer fillet explode" /></SideBar>
                <SideBar><Grip $wide /><Tools names="layPrev layFind dim copyObj arcEdit zoomWin zoomPrev scale layDel" /></SideBar>
              </SideBars>
            </DrawingRow>
            <Command>
              <CommandGrip>
                <Grip $wide $color="#ccc" />
                <svg width="16" height="16" viewBox="0 0 16 16">{L("M2 2l12 12M14 2L2 14", "#fff", 3)}</svg>
                <Win>{L("M9 9l12 13", "#fff", 4)}{L("M3 3q-1 7 4 7 5 0 3-7", "#fff", 3)}</Win>
              </CommandGrip>
              <CommandBody>
                <History>{history.map((h, i) => <Line key={i}>{h}</Line>)}</History>
                <CommandLine>
                  <svg width="21" height="20" viewBox="0 0 21 20">{F("M0 0h21v20H0z", "#dfe2e8", "#888")}{L("M4 5l5 5-5 5M11 15h7", "#333", 1.5)}</svg>
                  <Arrow $color="#777" />
                  <CommandInput aria-label="command" placeholder="键入命令" />
                </CommandLine>
              </CommandBody>
            </Command>
          </Center>
          <SymbolPanel>
            <PanelHeader><Grip /></PanelHeader>
            <PanelBody>
              <PanelMain>
                <ViewTabs>
                  <ViewTab aria-label="list"><Win w={18} h={16}>{L("M0 4h4M0 12h4M0 20h4M7 4h17M7 12h17M7 20h17", "#777", 4)}</Win></ViewTab>
                  <ViewTab aria-label="grid" $active><Win w={16} h={14}>{F("M0 1h11v9H0zM13 1h11v9H13zM0 13h11v9H0zM13 13h11v9H13z", "#777")}</Win></ViewTab>
                  <ViewTab aria-label="map"><Win w={16} h={18}>{F("M12 24L3 13Q1 1 12 0q11 1 9 13z", "#777")}{C(12, 10, 3, "#454545")}</Win></ViewTab>
                </ViewTabs>
                <Category>电力线</Category>
                <Category $open>通讯线</Category>
                <Symbols>
                  {symbols.map(([label, art]) => (
                    <Symbol key={label}>
                      <Preview><svg width="98" height="97" viewBox="0 0 98 97">{art}</svg></Preview>
                      {label}
                    </Symbol>
                  ))}
                </Symbols>
                <Category>管道</Category>
                <Category>地下检修井</Category>
                <Category>管道附属</Category>
              </PanelMain>
              <GroupTabs>
                <GroupGrip><Grip $wide /></GroupGrip>
                {groups.map((t) => <GroupTab key={t} $active={t === "管线设施"}>{t}</GroupTab>)}
              </GroupTabs>
            </PanelBody>
          </SymbolPanel>
        </Workspace>

        <BottomBar>
          <LayoutTabs>
            <LayoutTab $model>模型</LayoutTab>
            {layoutTabs.map((t) => <LayoutTab key={t} $active={t === "Layout3 (22)"}>{t}</LayoutTab>)}
            <NewTab $bottom aria-label="new layout"><svg width="12" height="12" viewBox="0 0 12 12">{L("M6 0v12M0 6h12", "#bbb", 2.5)}</svg></NewTab>
          </LayoutTabs>
          <Overflow>
            <button aria-label="more layouts"><svg width="16" height="30" viewBox="0 0 16 30">{F("M1 7l3 0 4 3 4-3 3 0-7 9zM1 17l3 0 4 3 4-3 3 0-7 9z", "#fff")}</svg></button>
            <LayoutMenu>
              <LayoutList>{layoutOptions.map((t) => <LayoutOption key={t} $active={t === "Layout3 (22)"}>{t}</LayoutOption>)}</LayoutList>
              <Scroll />
            </LayoutMenu>
          </Overflow>
          <Status>
            <Cell $width="228px">9.0236, -139.1572, 0.0000</Cell>
            <Cell $width="43px">图纸</Cell>
            <Cell $width="155px">
              <Win>{L("M4 2v19h19M4 14h6v7", g)}</Win>
              <Win>{C(11, 12, 9, "none", g, 2)}{L("M11 0v13h13M11 12l7-8", g, 1.5)}</Win>
              <Arrow />
              <Win w={26}>{L("M2 0l20 24M14 0v24M0 2l8 8", g, 1.5)}</Win>
              <Arrow />
            </Cell>
            <Cell $width="96px">
              <Win>{L("M20 4L3 21h20", g)}{C(12, 12, 2.5, g)}</Win>
              <Win>{L("M4 4h18v18H4z", "#1f8fff", 2.5)}{F("M0 0h8v8H0z", "#063")}{C(4, 4, 2, "#1fe01f")}</Win>
              <Arrow />
            </Cell>
            <Cell $width="38px"><Win w={26}>{L("M0 3h24M0 9h15M0 15h24M0 21h18", "#1f8fff", 4)}</Win></Cell>
            <Cell $width="111px">
              <Win>{L("M2 2h20v20H2z", g, 1.5, "3 2")}{L("M7 8h12v12H7zM11 12h5v5h-5z", g, 1.5)}</Win>
              <Win>{F("M0 23l7-10-4-3h6l3-4 4 8 7 9-9-3-3-4z", g)}{C(17, 4, 3.5, "none", g, 1.8)}</Win>
              <Win>{F("M0 23l7-10-4-3h6l3-4 4 8 7 9-9-3-3-4z", g)}{F("M20 0l-6 6h4l-3 5 8-6h-4z", g)}</Win>
            </Cell>
            <Cell $width="60px">
              <Win w={20}>{L("M12 2v20M2 12h20M5 5l14 14M19 5L5 19", g, 4)}{C(12, 12, 7, g)}{C(12, 12, 2.5, "#4c4c4c")}</Win>
              <Arrow />
            </Cell>
            <Cell $width="38px"><Win>{L("M12 1v22M1 12h22", g, 2.5)}</Win></Cell>
            <Cell $width="39px"><Win>{L("M2 2h10v9H2zM12 13l6 9H6z", g, 1.6)}{C(18, 11, 5, "none", g, 1.6)}</Win></Cell>
            <Cell $width="38px"><Win w={26} h={26}>{C(12, 12, 11, "#0b57a0", "#1f8fff", 2)}{L("M11 14l7-5", "#3fb0ff", 2)}</Win></Cell>
            <Cell $width="76px">
              <Win w={28}>{F("M0 1h23v20H0z", "#ddd", "#222")}{L("M1 19Q7-4 12 6t11 7", "#222", 1.6)}{F("M18 12l6 11H12z", "#e05a12")}</Win>
              <Win>{F("M1 12h14v10H1z", "#f2c31a")}{F("M8 3h11l3 12H9z", "#4a86c8")}{L("M2 2h5v12", "#eee")}{L("M11 17l4 5 8-9", "#39b12f", 3)}</Win>
            </Cell>
            <Cell $width="75px">
              <Win>{L("M1 3h22v18H1z", g, 2)}{L("M13 11l6-5M15 6h4v4M11 13l-6 5M5 14v4h4", g, 1.8)}</Win>
              <Win>{L("M0 4h24M0 12h24M0 20h24", g, 2)}</Win>
            </Cell>
          </Status>
        </BottomBar>
      </Window>
      <Strip>
        <StripPart $width="33px" $color="#7b7b7b" />
        <StripPart $width="32px" $color="#3c3c3c" />
        <StripPart $width="330px" $color="#373737" $end />
      </Strip>

      <Taskbar>
        <Start aria-label="start"><svg width="35" height="35" viewBox="0 0 35 35">{F("M0 0h17v17H0zM18 0h17v17H18zM0 18h17v17H0zM18 18h17v17H18z", "url(#win)")}</svg></Start>
        <Search>
          <Win>{C(10, 10, 8.5, "none", "#222", 2.2)}{L("M16 16l7 7", "#222", 2.6)}</Win>
          <SearchInput placeholder="搜索" />
          <svg width="74" height="40" viewBox="0 0 74 40">
            {F("M4 28L14 2l8 16 4 10zM42 28L50 8l3 4 5-9 9 25z", "#3f8a62")}
            {F("M14 2l8 16 4 10H16zM58 3l9 25h-9z", "#6fb08a")}
            {F("M24 28L31 14l4-5 8 19z", "#8cc3dc")}
            {F("M0 30q3-9 12-8 10 0 14 6l20-2q8-7 20-3 9 2 8 12l-8 4H10Q0 38 0 30z", "#8f9f3a")}
            {F("M30 22q12 2 6 6t4 6l12 6H14q12-4 12-8t4-10z", "#58d4e8")}
            {F("M6 32q8-8 18 0l-2 6H8zM50 33q8-8 18 0l-2 6H52z", "#3f7d22")}
            {L("M6 25L5 12M68 25l1-13", "#7a5427", 1.5)}
            {F("M0 13q5-6 10 0-5-3-10 0zM63 13q6-6 11 0-6-3-11 0zM58 8q5-4 9 1-4-2-9-1z", "#1f7a33")}
          </svg>
        </Search>
        <Task aria-label="task view"><svg width="36" height="34" viewBox="0 0 36 34">{F("M0 9h26v25H0z", "#262626")}{F("M10 0h26v24H10z", "#f4f4f4", "#ccc")}{F("M10 9h16v15H10z", "#b5b5b5")}</svg></Task>
        <Task aria-label="edge" $running><svg width="36" height="36" viewBox="0 0 36 36">{C(18, 18, 18, "url(#edge)")}{F("M14 20q0-6 6-7 7 0 9 5 1 4-3 6h8q2-3 2-7v9q-4 8-11 10-11-2-11-16z", "#0d52a8")}{F("M19 25q-2-5 2-9 4 2 3 6-1 3 2 5h8q-7 5-15-2z", "#d8f4f2")}</svg></Task>
        <Task aria-label="files" $running><svg width="36" height="34" viewBox="0 0 36 34">{F("M0 2q0-2 3-2h9l3 4h18q3 0 3 3v26H0z", "#e6a11c")}{F("M0 7h36v26H0z", "#fccf45")}{F("M6 34v-8q1-4 4-4h16q4 0 4 4v8z", "#1b7fd2")}{L("M12 28h12", "#0b4f94", 2)}</svg></Task>
        <Task aria-label="cass" $active $running>
          <svg width="36" height="36" viewBox="0 0 36 36">
            <rect width="36" height="36" rx="4" fill="#2c3a55" />
            {L("M28 7Q14 0 8 12q-5 12 7 18l6 2M26 11q-9-4-13 4-3 9 6 13", "#5fd0e0", 1.8)}
            {T("ASS", 25, 25, 8, "#dff", 400)}
          </svg>
        </Task>
        <Task aria-label="word" $running><svg width="34" height="36" viewBox="0 0 34 36">{F("M7 0h23q3 0 3 3v30q0 3-3 3H7z", "#3c8ff0")}{F("M7 0h23q3 0 3 3v8H7z", "#4fd0f8")}{F("M7 24h26v12H7z", "#1747c4")}<rect y="15" width="18" height="17" rx="3" fill="#153a9c" />{T("W", 9, 29, 14, "#fff")}</svg></Task>
        <Task aria-label="lens" $running><svg width="36" height="36" viewBox="0 0 36 36">{C(17, 18, 16, "#1d6fc9", "#d9ecfa", 1.5)}{C(18, 20, 11, "#e8f2f8")}{C(17, 21, 9, "#3f5870")}{C(15, 21, 4, "#8fae9a")}{C(29, 11, 4, "#fff")}</svg></Task>
        <Task aria-label="bird" $running><svg width="38" height="34" viewBox="0 0 38 34">{F("M6 2h17q6 6 5 14l-8 2Q14 8 6 2z", "#12c9ae")}{F("M0 10q10 12 22 6 5-6 15-5-4 5-6 12-6 9-17 9Q2 30 0 24z", "#2c63f2")}{F("M20 20q6-10 18-10-4 4-5 10-6 8-13 0z", "#143c9e")}</svg></Task>
        <Tray>
          <TrayItem aria-label="hidden icons"><Win w={18}>{L("M3 16l9-9 9 9", "#1b1b1b", 2.4)}</Win></TrayItem>
          <TrayItem aria-label="search tool"><Win w={26} h={26}>{L("M6 2Q-2 11 5 20M18 21Q26 13 19 4", "#e8b01e", 2)}{L("M5 4q7-5 14 0", "#e33b2e", 2)}{C(12, 12, 6, "#fff", "#2e9de0", 3)}{C(12, 12, 2.5, "#2fa84f")}{L("M17 17l5 6", "#2e7de0", 3)}</Win></TrayItem>
          <TrayItem aria-label="bird"><Win w={26} h={26}>{C(12, 12, 12, "#fff")}{F("M7 5h6q3 2 3 6l-4 2q-2-5-5-8z", "#12c9ae")}{F("M4 10q5 5 9 3 2-3 7-3-2 9-9 9-6-1-7-4z", "#2455d8")}</Win></TrayItem>
          <TrayItem aria-label="wechat"><Win w={26}><ellipse cx="9" cy="9" rx="9" ry="8" fill="#2fc25b" /><ellipse cx="17" cy="16" rx="7" ry="6" fill="#eef5f0" />{C(6, 8, 1.2, "#154")}{C(12, 8, 1.2, "#154")}{C(15, 15, 1, "#888")}{C(19, 15, 1, "#888")}</Win></TrayItem>
          <TrayItem aria-label="notes"><Win>{F("M4 3h16v20H4z", "#fff", "#444")}{F("M8 0h8v5H8z", "#555")}{L("M6 9h12M6 12h12M6 15h12M6 18h7", "#888", 1.4)}</Win></TrayItem>
          <TrayItem aria-label="tool"><Win>{F("M3 1h8v9H3zM13 1h8v9h-8zM3 12h8v7l-8 5zM13 12h8v12l-8-5z", "#000")}</Win></TrayItem>
          <TrayItem aria-label="guard"><Win>{F("M2 3l10-3 10 3v11q-2 7-10 10Q4 21 2 14z", "#1f74e8")}{L("M9 5v11h8", "#fff", 3.5)}</Win></TrayItem>
          <TrayItem aria-label="wps"><Win w={26}>{L("M1 4h4l4 12 4-12h9l-6 7", "#e8291c", 4)}{F("M17 11q8 7 5 11-5 4-9 0-2-4 4-11z", "#2b9af3")}</Win></TrayItem>
          <TrayItem aria-label="location"><Win>{L("M22 1L2 14l9 1 9 8z", "#1c3c50", 1.8)}</Win></TrayItem>
          <TrayItem>中</TrayItem>
          <TrayItem $width="66px">拼</TrayItem>
          <TrayItem $width="42px" aria-label="wifi"><Win>{L("M1 9q11-11 22 0M4 13q8-8 16 0M8 17q4-4 8 0", "#1b1b1b", 2)}{C(12, 20, 2, "#1b1b1b")}</Win></TrayItem>
          <TrayItem $width="36px" aria-label="volume"><Win>{L("M1 9h4l6-5v16l-6-5H1z", "#1b1b1b", 1.8)}{L("M14 8q3 4 0 8", "#1b1b1b", 1.8)}{L("M17 5q5 7 0 14M20 2q7 10 0 20", "#9bb", 1.5)}</Win></TrayItem>
          <TrayItem $width="40px" aria-label="battery"><svg width="30" height="22" viewBox="0 0 30 22"><rect x="1" y="6" width="25" height="14" rx="4" fill="none" stroke="#1b1b1b" strokeWidth="2" />{F("M4 9h19v8H4zM27 10h3v6h-3z", "#1b1b1b")}{L("M15 14V7", "#cdeff1", 4)}{F("M11 3h2V0h1v3h3V0h1v3h2v5q-2 3-4 3v4h-1v-4q-3 0-4-3z", "#1b1b1b")}</svg></TrayItem>
          <Clock>21:33<br />2026/3/9</Clock>
        </Tray>
      </Taskbar>

      <Mark $left="1432px" $top="846px" $width="369px" $height="643px" />
      <Mark $left="78px" $top="1443px" $width="1295px" $height="73px" />
    </Page>
  )
}

export default App
